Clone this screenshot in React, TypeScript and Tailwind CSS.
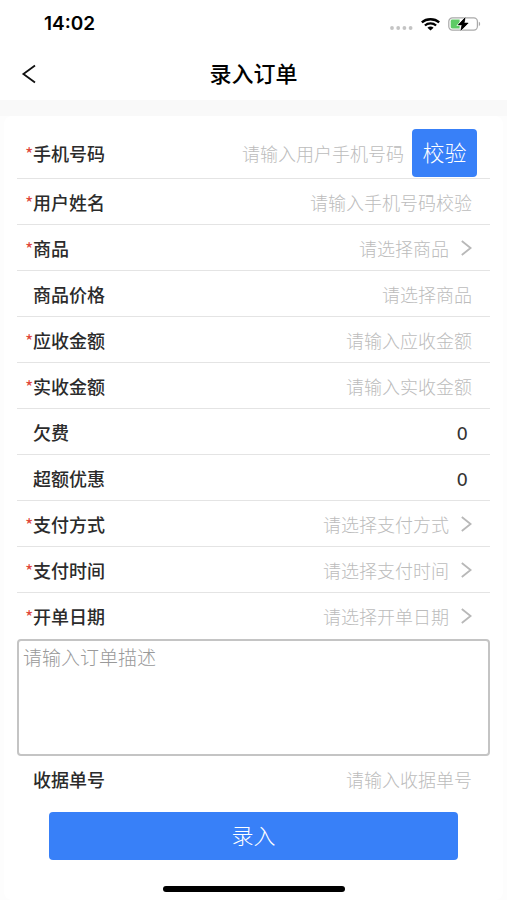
import { useState } from "react";

type Field = {
  name: string;
  label: string;
  required?: boolean;
  placeholder?: string;
  type: "text" | "select" | "number";
};

const fields: Field[] = [
  { name: "username", label: "用户姓名", required: true, placeholder: "请输入手机号码校验", type: "text" },
  { name: "product", label: "商品", required: true, placeholder: "请选择商品", type: "select" },
  { name: "price", label: "商品价格", placeholder: "请选择商品", type: "text" },
  { name: "receivable", label: "应收金额", required: true, placeholder: "请输入应收金额", type: "text" },
  { name: "received", label: "实收金额", required: true, placeholder: "请输入实收金额", type: "text" },
  { name: "arrears", label: "欠费", type: "number" },
  { name: "discount", label: "超额优惠", type: "number" },
  { name: "pay_method", label: "支付方式", required: true, placeholder: "请选择支付方式", type: "select" },
  { name: "pay_time", label: "支付时间", required: true, placeholder: "请选择支付时间", type: "select" },
  { name: "order_date", label: "开单日期", required: true, placeholder: "请选择开单日期", type: "select" },
];

function StatusBar() {
  return (
    <div className="flex h-12 items-center justify-between pl-[44px] pr-[26px]">
      <span className="font-['Inter',sans-serif] text-[19px] font-semibold text-black">14:02</span>
      <div className="flex items-center gap-2">
        <svg width="23" height="14" viewBox="0 0 23 14" fill="#c4c4c4">
          <circle cx="2" cy="11" r="1.9" />
          <circle cx="8.2" cy="11" r="1.9" />
          <circle cx="14.4" cy="11" r="1.9" />
          <circle cx="20.6" cy="11" r="1.9" />
        </svg>
        <svg width="19" height="13" viewBox="0 0 19 13" fill="none" stroke="#000" strokeWidth="2.3">
          <path d="M0.8 4.4C5.6 0.2 13.4 0.2 18.2 4.4" />
          <path d="M3.9 7.5C7 4.7 12 4.7 15.1 7.5" />
          <path d="M6.4 9.7C8.2 8.1 10.8 8.1 12.6 9.7L9.5 12.4Z" fill="#000" stroke="none" />
        </svg>
        <svg width="33" height="14" viewBox="0 0 33 14" fill="none">
          <rect x="0.8" y="0.9" width="28.6" height="12.2" rx="3.6" stroke="#a9a9a9" strokeWidth="1.2" />
          <path d="M4.4 2.6H11.6V11.4H4.4C3.3 11.4 2.7 10.8 2.7 9.8V4.2C2.7 3.2 3.3 2.6 4.4 2.6Z" fill="#5ecb66" />
          <path d="M30.8 4.8C32.6 5.4 32.6 8.6 30.8 9.2Z" fill="#a9a9a9" />
          <path d="M17.2 0.6L10.2 7.9H14L12.8 13.4L20.2 6H16.1Z" fill="#000" stroke="#fff" strokeWidth="1.6" paintOrder="stroke" />
          <path d="M17.2 0.6L10.2 7.9H14L12.8 13.4L20.2 6H16.1Z" fill="#000" stroke="#000" strokeWidth="0.5" />
        </svg>
      </div>
    </div>
  );
}

function Label({ htmlFor, required, children }: { htmlFor: string; required?: boolean; children: React.ReactNode }) {
  return (
    <label htmlFor={htmlFor} className="flex shrink-0 items-center text-lg font-medium text-[#2b2b2b]">
      <span className="w-2 font-normal text-[#e0483c]">{required ? "*" : ""}</span>
      {children}
    </label>
  );
}

const inputClass =
  "h-full w-full min-w-0 flex-1 bg-transparent text-right text-lg font-light text-[#333] outline-none placeholder:text-[#bcbcbc]";

export default function App() {
  const [form, setForm] = useState<Record<string, string>>({ arrears: "0", discount: "0" });

  function handleChange(e: React.ChangeEvent<HTMLInputElement | HTMLTextAreaElement | HTMLSelectElement>) {
    const { name, value } = e.target;
    setForm((prev) => ({ ...prev, [name]: value }));
  }

  return (
    <div className="min-h-screen bg-[#fdfdfd] font-['Noto_Sans_CJK_SC',sans-serif]">
      <header className="border-b-16 border-[#f9f9f9] bg-white">
        <StatusBar />
        <div className="grid h-[52px] grid-cols-[40px_1fr_40px] items-center px-3">
          <button type="button" aria-label="返回" className="flex h-10 items-center pl-2">
            <svg width="18" height="20" viewBox="0 0 18 20" fill="none" stroke="#111" strokeWidth="1.8">
              <path d="M15 1.5L3.4 10L15 18.5" />
            </svg>
          </button>
          <h1 className="pb-1 text-center text-[22px] font-medium text-black">录入订单</h1>
        </div>
      </header>

      <form onSubmit={(e) => e.preventDefault()} className="mx-1 rounded-lg bg-white px-[13px] pb-2">
        {/* 手机号码 */}
        <div className="flex h-[63px] items-center border-b border-[#e4e4e4] pl-2 pr-[13px] pt-3">
          <Label htmlFor="phone" required>手机号码</Label>
          <input id="phone" name="phone" type="tel" value={form.phone ?? ""} onChange={handleChange} placeholder="请输入用户手机号码" className={inputClass} />
          <button type="button" className="ml-2 h-12 w-[65px] shrink-0 rounded bg-[#3880f8] pb-1 text-[22px] font-light text-white">
            校验
          </button>
        </div>

        <div>
          {fields.map((f) => (
            <div key={f.name} className="flex h-[46px] items-center border-b border-[#e4e4e4] pl-2 pr-[18px] last:border-0">
              <Label htmlFor={f.name} required={f.required}>{f.label}</Label>
              {f.type === "text" && (
                <input id={f.name} name={f.name} type="text" value={form[f.name] ?? ""} onChange={handleChange} placeholder={f.placeholder} className={inputClass} />
              )}
              {f.type === "number" && (
                <input id={f.name} name={f.name} type="text" inputMode="decimal" value={form[f.name]} onChange={handleChange} className="h-full w-full min-w-0 flex-1 bg-transparent pr-1 pt-1 text-right font-['DejaVu_Sans',sans-serif] text-lg text-[#333] outline-none" />
              )}
              {f.type === "select" && (
                <>
                  <select id={f.name} name={f.name} value={form[f.name] ?? ""} onChange={handleChange} className="h-full w-full min-w-0 flex-1 appearance-none bg-transparent text-right text-lg font-light text-[#bcbcbc] outline-none">
                    <option value="">{f.placeholder}</option>
                  </select>
                  <svg className="ml-3 shrink-0" width="11" height="16" viewBox="0 0 11 16" fill="none" stroke="#b8b8b8" strokeWidth="1.8">
                    <path d="M0.8 1L9.6 8L0.8 15" />
                  </svg>
                </>
              )}
            </div>
          ))}
        </div>

        <textarea
          name="remark"
          aria-label="订单描述"
          value={form.remark ?? ""}
          onChange={handleChange}
          placeholder="请输入订单描述"
          className="block h-[117px] w-full resize-none rounded border-2 border-[#c4c4c4] px-1 py-0.5 text-[19px] font-light text-[#333] outline-none placeholder:text-[#999]"
        />

        {/* 收据单号 */}
        <div className="flex h-[46px] items-center pl-2 pr-[18px]">
          <Label htmlFor="receipt">收据单号</Label>
          <input id="receipt" name="receipt" type="text" value={form.receipt ?? ""} onChange={handleChange} placeholder="请输入收据单号" className={inputClass} />
        </div>

        <div className="px-8 pt-[10px]">
          <button type="submit" className="h-12 w-full rounded bg-[#3880f8] pb-1 text-[22px] font-light text-white">
            录入
          </button>
        </div>

        <div className="mx-auto mt-[26px] h-[6px] w-[182px] rounded-full bg-black" />
      </form>
    </div>
  );
}
